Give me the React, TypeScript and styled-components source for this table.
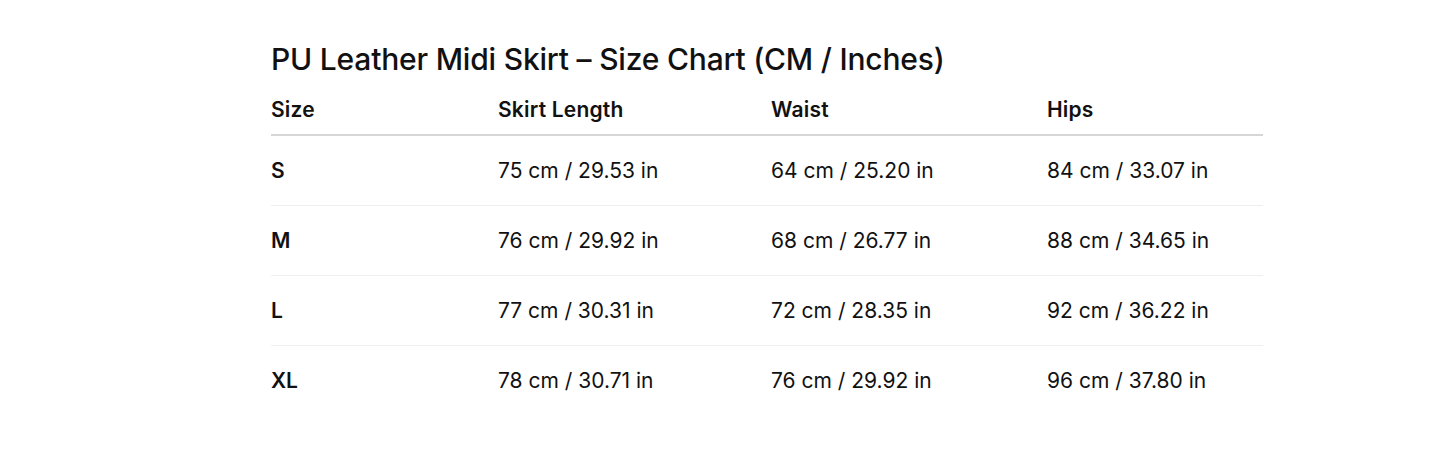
import React from "react";
import styled, { createGlobalStyle } from "styled-components";

const Global = createGlobalStyle`
  html, body { margin: 0; padding: 0; background: #ffffff; }
  body { font-family: Inter, "Noto Sans", sans-serif; color: #111111; }
`;

const Page = styled.div`
  padding: 39px 182px 40px 271px;
`;

const Title = styled.h2`
  margin: 0 0 12px 0;
  font-size: 30px;
  font-weight: 500;
  line-height: 40px;
  letter-spacing: -0.2px;
  color: #111111;
`;

const Table = styled.table`
  width: 992px;
  border-collapse: collapse;
`;

const HeadCell = styled.th<{ $w: number }>`
  width: ${(p) => p.$w}px;
  text-align: left;
  font-size: 21px;
  font-weight: 600;
  line-height: 38px;
  padding: 0 0 5px 0;
  border-bottom: 2px solid #d6d6d6;
  color: #111111;
  letter-spacing: 0.2px;
`;

const Row = styled.tr<{ $last?: boolean }>`
  border-bottom: ${(p) => (p.$last ? "none" : "1px solid #efefef")};
`;

const Cell = styled.td<{ $bold?: boolean }>`
  height: 69px;
  padding: 0;
  font-size: 21px;
  font-weight: ${(p) => (p.$bold ? 600 : 400)};
  color: #111111;
  vertical-align: middle;
`;

const rows = [
  ["S", "75 cm / 29.53 in", "64 cm / 25.20 in", "84 cm / 33.07 in"],
  ["M", "76 cm / 29.92 in", "68 cm / 26.77 in", "88 cm / 34.65 in"],
  ["L", "77 cm / 30.31 in", "72 cm / 28.35 in", "92 cm / 36.22 in"],
  ["XL", "78 cm / 30.71 in", "76 cm / 29.92 in", "96 cm / 37.80 in"],
];

const heads: [string, number][] = [
  ["Size", 227],
  ["Skirt Length", 273],
  ["Waist", 276],
  ["Hips", 216],
];

export default function App() {
  return (
    <>
      <Global />
      <Page>
        <Title>PU Leather Midi Skirt – Size Chart (CM / Inches)</Title>
        <Table>
          <thead>
            <tr>
              {heads.map(([h, w]) => (
                <HeadCell key={h} $w={w}>
                  {h}
                </HeadCell>
              ))}
            </tr>
          </thead>
          <tbody>
            {rows.map((r, i) => (
              <Row key={r[0]} $last={i === rows.length - 1}>
                {r.map((c, j) => (
                  <Cell key={j} $bold={j === 0}>
                    {c}
                  </Cell>
                ))}
              </Row>
            ))}
          </tbody>
        </Table>
      </Page>
    </>
  );
}
